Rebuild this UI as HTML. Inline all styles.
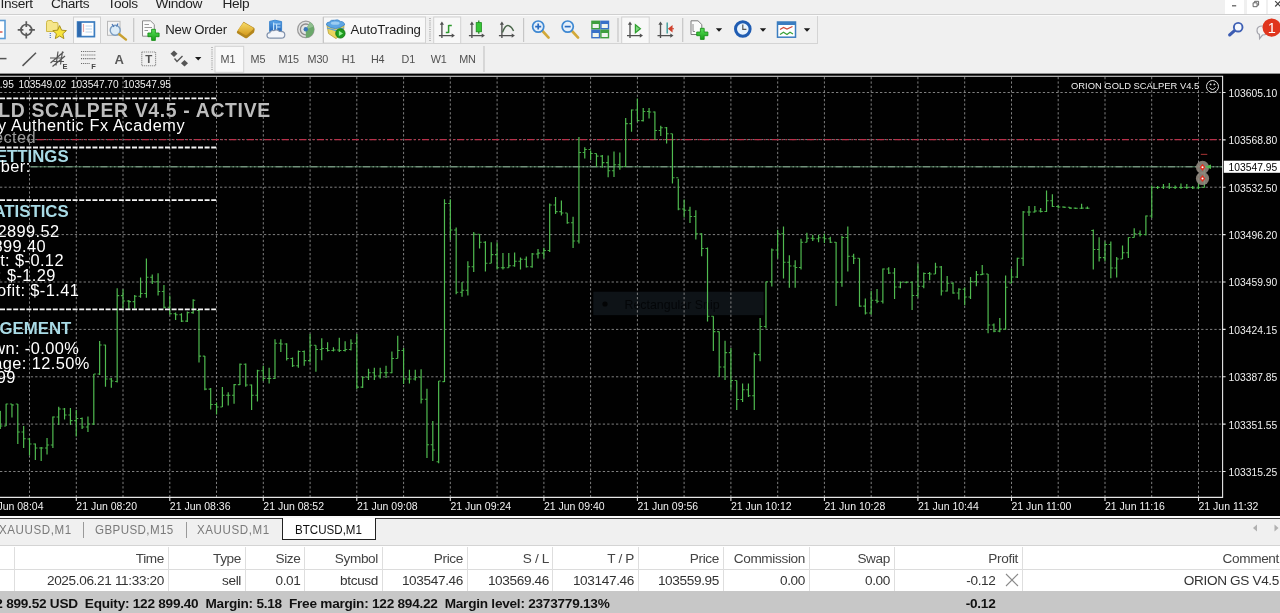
<!DOCTYPE html>
<html><head><meta charset="utf-8"><title>BTCUSD,M1</title>
<style>
html,body{margin:0;padding:0}
body{width:1280px;height:613px;overflow:hidden;background:#f0f0f0;position:relative;font-family:"Liberation Sans",sans-serif;color:#222}
.abs{position:absolute}
.menu span{position:absolute;top:-4px;font-size:13.7px;color:#222;letter-spacing:-0.35px;white-space:nowrap}
.tf span{position:absolute;top:53.5px;font-size:10.2px;color:#555;white-space:nowrap;letter-spacing:-0.2px}
.sep{position:absolute;width:1px;background:#c4c4c4}
.tab{position:absolute;top:522.1px;font-size:13.1px;color:#7a7a7a;white-space:nowrap;display:inline-block;transform:scaleX(.885);transform-origin:0 0}
.th,.td{position:absolute;font-size:13.6px;white-space:nowrap;letter-spacing:-0.35px;text-align:right}
.th{top:550.5px;color:#444}
.td{top:573.4px;color:#333}
.vs{position:absolute;top:547px;width:1px;height:44px;background:#dedede}
#wrap{position:absolute;left:0;top:0;width:1280px;height:613px;will-change:transform;opacity:.999}
</style></head><body><div id="wrap">
<!-- menu -->
<div class="menu">
<span style="left:0.5px">Insert</span><span style="left:51px">Charts</span><span style="left:107.5px">Tools</span><span style="left:155.5px">Window</span><span style="left:222.5px">Help</span>
</div>
<div class="abs" style="left:1225px;top:0;width:19px;height:13.5px;background:#fff"></div>
<div class="abs" style="left:1247px;top:0;width:18.5px;height:13.5px;background:#fff"></div>
<div class="abs" style="left:1267.5px;top:0;width:13px;height:13.5px;background:#fff"></div>
<div class="abs" style="left:0;top:13.8px;width:1280px;height:1px;background:#cfcfcf"></div>
<div class="abs" style="left:0;top:14.8px;width:1280px;height:1px;background:#fbfbfb"></div>
<div class="abs" style="left:0;top:43.3px;width:817px;height:1px;background:#d4d4d4"></div>
<div class="abs" style="left:817px;top:16px;width:1px;height:28px;background:#d4d4d4"></div>
<!--TB0--><svg width="1280" height="74" viewBox="0 0 1280 74" style="position:absolute;left:0;top:0;font-family:'Liberation Sans',sans-serif">
<defs>
<linearGradient id="gold" x1="0" y1="0" x2="0" y2="1"><stop offset="0" stop-color="#f7dc6a"/><stop offset="1" stop-color="#d49a1c"/></linearGradient>
<linearGradient id="blu" x1="0" y1="0" x2="0" y2="1"><stop offset="0" stop-color="#5aa5ea"/><stop offset="1" stop-color="#2466b8"/></linearGradient>
<linearGradient id="grn" x1="0" y1="0" x2="0" y2="1"><stop offset="0" stop-color="#58e058"/><stop offset="1" stop-color="#18a018"/></linearGradient>
</defs>
<!-- active button backgrounds -->
<g fill="#f8f8f8" stroke="#d2d2d2" stroke-width="1">
<rect x="73.5" y="17" width="27" height="26.5"/>
<rect x="323.5" y="17" width="102" height="26"/>
<rect x="433.7" y="17" width="27" height="26.5"/>
<rect x="621.7" y="17" width="27.5" height="26.5"/>
<rect x="215" y="46.3" width="28.7" height="26"/>
</g>
<!-- separators -->
<g stroke="#c6c6c6" stroke-width="1.2">
<path d="M133.7 18V42M323.3 17V43M523.6 18V42M618 18V42M682.7 18V42M484 46V72"/>
</g>
<g stroke="#b0b0b0" stroke-width="1.6" stroke-dasharray="1 1.2"><path d="M430 18V42M212 47V71"/></g>
<!-- partial doc icon -->
<rect x="-3" y="20.5" width="8" height="18" fill="#fff" stroke="#5b9bd5" stroke-width="1.6"/>
<path d="M0 32H2.5" stroke="#d04030" stroke-width="1.3"/>
<!-- crosshair -->
<g stroke="#5a5a5a" stroke-width="1.7" fill="none"><circle cx="26.3" cy="29.9" r="5.4"/><path d="M26.3 21.3V27M26.3 32.8V38.5M17.7 29.9H23.4M29.2 29.9H34.9"/></g>
<!-- folder star -->
<path d="M46.5 22.5Q46.5 20.5 48.5 20.5H51.5L53 22.5H57Q58 22.5 58 24V31.5H46.5Z" fill="#f6e68a" stroke="#c9b23c" stroke-width="0.9"/>
<path d="M59.6 25.6L61.6 30.2L66.4 30.6L62.8 33.8L63.9 38.6L59.6 36L55.3 38.6L56.4 33.8L52.8 30.6L57.6 30.2Z" fill="#f8e43c" stroke="#a8901c" stroke-width="1"/>
<path d="M50.3 33V39" stroke="#4a78c8" stroke-width="1.2" stroke-dasharray="1 1"/>
<!-- window icon -->
<rect x="77.6" y="22" width="16.8" height="14.6" fill="#fff" stroke="#3b7dc0" stroke-width="1.7"/>
<rect x="77.6" y="22" width="4" height="14.6" fill="#2f69ad"/>
<path d="M83.5 24.5V32" stroke="#d05050" stroke-width="1.2" stroke-dasharray="1 1"/>
<path d="M85.5 26H92M85.5 29H92M85.5 32H92" stroke="#bcd6ee" stroke-width="1"/>
<!-- clock magnifier -->
<rect x="107.5" y="21.3" width="12.5" height="14" fill="#f4f4f4" stroke="#b8b8b8" stroke-width="1"/>
<circle cx="115.2" cy="30.2" r="5" fill="#dcecf8" stroke="#7a9cc0" stroke-width="1.4"/>
<path d="M112 24L114 27M118 23.5L116.5 26.5" stroke="#4a78b8" stroke-width="1.2"/>
<path d="M119.3 34.2L126 39.6" stroke="#c9a030" stroke-width="2.4" stroke-linecap="round"/>
<!-- new order -->
<path d="M142.5 20.8H150.5L154.3 24.5V36.2H142.5Z" fill="#fbfbfb" stroke="#8c8c8c" stroke-width="1"/>
<path d="M144.5 24.5H149M144.5 27.5H152M144.5 30.5H148" stroke="#9a9a9a" stroke-width="1.1"/>
<path d="M151.6 29.3H155.4V33H159.1V36.7H155.4V40.4H151.6V36.7H147.9V33H151.6Z" fill="url(#grn)" stroke="#128a12" stroke-width="0.8"/>
<text x="165.3" y="33.7" font-size="13.2" fill="#1e1e1e" letter-spacing="-0.25">New Order</text>
<!-- gold -->
<path d="M243.6 21.8L254 27.8Q255 28.6 254.6 30L254 32.6L247.2 38Q246.2 38.6 245 38L237.6 33.6Q236.4 32.8 237 31.4Z" fill="#b4861c"/>
<path d="M243.6 22.4L253 27.8Q253.8 28.4 253.2 29.2L247 35Q246.2 35.6 245.4 35.2L238.6 31.2Q237.8 30.6 238.2 29.8Z" fill="url(#gold)"/>
<!-- cloud chart -->
<path d="M269.6 21.4L275 20.2L281.6 21.6V31.5H269.6Z" fill="url(#blu)" stroke="#2a78c8" stroke-width="0.8"/>
<path d="M273.6 22.6V31M273.6 24H280.4M276.6 27H280.4M276.6 24V31" stroke="#bfe0fb" stroke-width="1.2" fill="none"/>
<path d="M270.2 38.2Q267 38.2 267 35.2Q267 32.8 269.8 32.6Q270.8 30 274 30.6Q276.6 28.8 279.4 31.4Q284.8 31 284.8 34.8Q284.8 38.2 281.4 38.2Z" fill="#f4f6fa" stroke="#8091ab" stroke-width="1.2"/>
<!-- signal -->
<circle cx="305.8" cy="29.4" r="8.2" fill="#e4e4e4" stroke="#9c9c9c" stroke-width="1.3"/>
<circle cx="305.8" cy="29.4" r="5.4" fill="none" stroke="#8c8c8c" stroke-width="1.3"/>
<path d="M305.8 29.4L310 22.2A8.4 8.4 0 0 1 305.8 37.8Z" fill="#6ba86b"/>
<path d="M305.8 29.4L310 22.2A8.4 8.4 0 0 1 313.6 26.4Z" fill="#8fbf8f"/>
<circle cx="305.8" cy="29.2" r="2.2" fill="#3b78b8"/>
<!-- autotrading icon -->
<path d="M327 25.5L344 25.5L343.4 32L336 38.6L328.6 33.6Z" fill="#ead45e" stroke="#b8a030" stroke-width="0.8"/>
<path d="M327 28L336 30.6L344 28" stroke="#5f9fd8" stroke-width="1.2" fill="none"/>
<path d="M326.4 25Q326.2 22.2 329.4 22Q331 19.6 334.4 20.2Q338.4 19 340.4 21.4Q344.6 21.6 344.6 25Q340 28.4 335.4 28.6Q330.6 28.4 326.4 25Z" fill="#5ea6e4" stroke="#3c84c8" stroke-width="0.8"/>
<ellipse cx="335.2" cy="23.2" rx="4.4" ry="1.6" fill="#9ccdf2"/>
<circle cx="340.4" cy="33.4" r="4.7" fill="#1f9c1f" stroke="#107410" stroke-width="0.8"/>
<path d="M338.9 30.8L343 33.4L338.9 36Z" fill="#9af09a"/>
<text x="350.6" y="34" font-size="13.2" fill="#1e1e1e" letter-spacing="-0.1">AutoTrading</text>
<!-- chart type icons -->
<path d="M441.9 23.6V38M438.9 35.6H452.9" stroke="#505050" stroke-width="1.35" fill="none"/><path d="M441.9 21.4L439.79999999999995 24.8H444.0Z" fill="#505050"/><path d="M454.9 35.6L451.7 33.5V37.7Z" fill="#505050"/>
<path d="M471.9 23.6V38M468.9 35.6H482.9" stroke="#505050" stroke-width="1.35" fill="none"/><path d="M471.9 21.4L469.79999999999995 24.8H474.0Z" fill="#505050"/><path d="M484.9 35.6L481.7 33.5V37.7Z" fill="#505050"/>
<path d="M501.9 23.6V38M498.9 35.6H512.9" stroke="#505050" stroke-width="1.35" fill="none"/><path d="M501.9 21.4L499.79999999999995 24.8H504.0Z" fill="#505050"/><path d="M514.9 35.6L511.7 33.5V37.7Z" fill="#505050"/>
<path d="M630 23.6V38M627 35.6H641" stroke="#505050" stroke-width="1.35" fill="none"/><path d="M630 21.4L627.9 24.8H632.1Z" fill="#505050"/><path d="M643 35.6L639.8 33.5V37.7Z" fill="#505050"/>
<path d="M660.5 23.6V38M657.5 35.6H671.5" stroke="#505050" stroke-width="1.35" fill="none"/><path d="M660.5 21.4L658.4 24.8H662.6Z" fill="#505050"/><path d="M673.5 35.6L670.3 33.5V37.7Z" fill="#505050"/>
<path d="M448.6 25V33M448.6 25.4H451.8M445.8 32.4H448.6" stroke="#2f9a2f" stroke-width="1.5" fill="none"/>
<path d="M478.8 20.6V33.8" stroke="#1a7a1a" stroke-width="1.2"/><rect x="476.2" y="22.6" width="5.2" height="9.2" fill="#35c535" stroke="#1c8c1c" stroke-width="0.8"/>
<path d="M502.4 32.6Q505.4 24.4 508.6 25.6T513.6 31" stroke="#4a664a" stroke-width="1.4" fill="none"/>
<path d="M635.4 24.8L640.4 28.8L635.4 32.8Z" fill="#7fd67f" stroke="#2fa02f" stroke-width="1.2"/>
<path d="M667.2 22.6V33.6" stroke="#3a9a98" stroke-width="1.4"/><path d="M674 28.8H671M668.8 28.8L672 26.2V31.4Z" stroke="#d0402c" stroke-width="1.1" fill="#d0402c"/>
<!-- zoom in/out -->
<g>
<path d="M542.5 31L548.6 37.6" stroke="#d2a838" stroke-width="2.6" stroke-linecap="round"/>
<circle cx="538.2" cy="26.6" r="5.6" fill="#e6f0fa" stroke="#3e88d2" stroke-width="1.7"/>
<path d="M535.2 26.6H541.2M538.2 23.6V29.6" stroke="#2a6cc0" stroke-width="1.7"/>
<path d="M572 31L578.1 37.6" stroke="#d2a838" stroke-width="2.6" stroke-linecap="round"/>
<circle cx="567.7" cy="26.6" r="5.6" fill="#e6f0fa" stroke="#3e88d2" stroke-width="1.7"/>
<path d="M564.7 26.6H570.7" stroke="#2a6cc0" stroke-width="1.7"/>
</g>
<!-- tile -->
<rect x="591.2" y="20.6" width="9" height="9" fill="#3d9e3d"/><rect x="600.2" y="20.6" width="9" height="9" fill="#3770c8"/>
<rect x="591.2" y="29.6" width="9" height="8.8" fill="#3770c8"/><rect x="600.2" y="29.6" width="9" height="8.8" fill="#3d9e3d"/>
<g fill="#eef4ee"><rect x="592.6" y="24" width="6.2" height="4"/><rect x="601.6" y="24" width="6.2" height="4"/><rect x="592.6" y="33" width="6.2" height="4"/><rect x="601.6" y="33" width="6.2" height="4"/></g>
<!-- doc plus -->
<path d="M691 20.8H698L701.8 24.5V34.5H691Z" fill="#fbfbfb" stroke="#7c7c7c" stroke-width="1"/>
<path d="M693 24V31.5H695" stroke="#8a8a8a" stroke-width="1" fill="none"/>
<path d="M700.4 28.3H704.2V32H707.9V35.7H704.2V39.4H700.4V35.7H696.7V32H700.4Z" fill="url(#grn)" stroke="#128a12" stroke-width="0.8"/>
<g fill="#1a1a1a"><path d="M715.8 28.2H722.2L719 31.8Z"/><path d="M759.8 28.2H766.2L763 31.8Z"/><path d="M803.8 28.2H810.2L807 31.8Z"/><path d="M195 57H201.4L198.2 60.6Z"/></g>
<!-- clock -->
<circle cx="742.8" cy="29" r="7.3" fill="#e8f3fd" stroke="#1f5cb2" stroke-width="3"/>
<path d="M742.8 24.6V29.4H746.4" stroke="#555" stroke-width="1.2" fill="none"/>
<!-- chart template icon -->
<rect x="777.5" y="22" width="18" height="15.2" fill="#fff" stroke="#3b7dc0" stroke-width="1.5"/>
<rect x="777.5" y="22" width="18" height="3" fill="#3b7dc0"/>
<path d="M780 29.5L783.5 27.5L787 29L792.5 26.5" stroke="#d04a3a" stroke-width="1.2" fill="none"/>
<path d="M780 34.5L783.5 32.2L787 34.5L790 32.2L793 34" stroke="#3aa23a" stroke-width="1.2" fill="none"/>
<!-- search & chat -->
<path d="M1235.4 29.9L1229.6 35" stroke="#3c5cb2" stroke-width="3" stroke-linecap="round"/>
<circle cx="1238.2" cy="27.2" r="4.3" fill="#f6f9fe" stroke="#3f60b4" stroke-width="1.9"/>
<path d="M1257 30.5Q1257 26 1262.5 26Q1268 26 1268 30.5Q1268 35 1262.5 35L1259.6 38.6L1259.4 34.4Q1257 33.4 1257 30.5Z" fill="#f4f4f4" stroke="#a4a4ac" stroke-width="1.2"/>
<circle cx="1271.7" cy="27.6" r="9.2" fill="#e0361e"/>
<text x="1271.7" y="32.8" font-size="14.5" fill="#fff" text-anchor="middle" style="text-rendering:geometricPrecision">1</text>
<!-- window controls -->
<path d="M1232 5.8H1236.2" stroke="#555" stroke-width="1.2"/>
<path d="M1254.6 2.6V1.3H1258.6V5.2H1257.3M1253.1 2.8H1257.1V6.7H1253.1Z" stroke="#555" stroke-width="0.9" fill="none"/>
<path d="M1275.2 1.2L1280.5 6.5M1280.5 1.2L1275.2 6.5" stroke="#444" stroke-width="1.2"/>
<!-- toolbar 2 -->
<path d="M0 58.6H6.5" stroke="#555" stroke-width="1.5"/>
<path d="M22.5 65.9L36 52.8" stroke="#555" stroke-width="1.5"/>
<g stroke="#555" stroke-width="1.2" fill="none"><path d="M50.5 63L63.5 52M52.5 66.5L65 56M50 58H61M53.5 61.5H64M56 65.5L58 51.5M60.5 64.5L62.5 51.5"/></g>
<text x="62.5" y="69" font-size="7.5" font-weight="bold" fill="#444">E</text>
<g stroke="#666" stroke-width="1.1" stroke-dasharray="1 0.9"><path d="M81 51.5H95.5M81 55H95.5M81 58.6H95.5M81 63.5H90"/></g>
<text x="91.3" y="69.4" font-size="7.5" font-weight="bold" fill="#444">F</text>
<text x="114.4" y="63.6" font-size="13" font-weight="bold" fill="#5a5a5a">A</text>
<rect x="141.8" y="52" width="13.8" height="13.8" fill="none" stroke="#777" stroke-width="1.1" stroke-dasharray="1 1"/>
<text x="148.7" y="63.4" font-size="11.5" font-weight="bold" fill="#555" text-anchor="middle">T</text>
<g fill="#555"><path d="M170.5 53.8L174 50.6L177.5 53.8L174 57Z"/><path d="M181 63.2L184.5 60L188 63.2L184.5 66.4Z"/></g>
<path d="M174.5 58.5L177 61.5L182.5 56" stroke="#555" stroke-width="1.4" fill="none"/>
<g font-size="10.8" fill="#505050" letter-spacing="-0.2">
<text x="220.6" y="63.1">M1</text><text x="250.6" y="63.1">M5</text><text x="278.4" y="63.1">M15</text><text x="307.6" y="63.1">M30</text><text x="341.8" y="63.1">H1</text><text x="371" y="63.1">H4</text><text x="401.6" y="63.1">D1</text><text x="430.8" y="63.1">W1</text><text x="459.2" y="63.1">MN</text>
</g>
</svg>
<!--TB1-->
<!-- chart -->
<svg width="1280" height="613" viewBox="0 0 1280 613" style="position:absolute;left:0;top:0;font-family:'Liberation Sans',sans-serif"><rect x="0" y="73.6" width="1280" height="442.8" fill="#000"/>
<rect x="593.3" y="291.7" width="170.3" height="23.5" fill="#0e1317"/>
<text x="624.5" y="308.6" font-size="12.4" fill="#040608" style="font-family:'Liberation Sans',sans-serif">Rectangular Snip</text>
<circle cx="605" cy="304" r="2.6" fill="#030405"/>
<path d="M29.5 77V497M76.3 77V497M123.0 77V497M169.8 77V497M216.5 77V497M263.3 77V497M310.1 77V497M356.8 77V497M403.6 77V497M450.3 77V497M497.1 77V497M543.9 77V497M590.6 77V497M637.4 77V497M684.1 77V497M730.9 77V497M777.7 77V497M824.4 77V497M871.2 77V497M917.9 77V497M964.7 77V497M1011.5 77V497M1058.2 77V497M1105.0 77V497M1151.7 77V497M1198.5 77V497M0 92.5H1222M0 139.6H1222M0 187.2H1222M0 234.6H1222M0 282.0H1222M0 329.4H1222M0 376.8H1222M0 424.1H1222M0 471.5H1222" stroke="#8e8e8e" stroke-width="0.9" stroke-dasharray="2.3 2.1" fill="none"/>
<path d="M0 76.2H1222.6V497.4H0" stroke="#e6e6e6" stroke-width="1.1" fill="none"/>
<path d="M76.3 497V501M169.8 497V501M263.3 497V501M356.8 497V501M450.3 497V501M543.9 497V501M637.4 497V501M730.9 497V501M824.4 497V501M917.9 497V501M1011.5 497V501M1105.0 497V501M1198.5 497V501M1222 92.5H1225.6M1222 139.9H1225.6M1222 187.2H1225.6M1222 234.6H1225.6M1222 282.0H1225.6M1222 329.4H1225.6M1222 376.8H1225.6M1222 424.1H1225.6M1222 471.5H1225.6" stroke="#e6e6e6" stroke-width="1.1" fill="none"/>
<path d="M37 139.6H1222" stroke="#b8304a" stroke-width="1.1" stroke-dasharray="7 2.5 1.5 2.5 1.5 2.5" fill="none"/>
<path d="M30.5 166.8H1222" stroke="#4c7859" stroke-width="1" fill="none"/>
<path d="M30.5 166.8H1222" stroke="#8cab96" stroke-width="1" stroke-dasharray="7 2.5 1.5 2.5 1.5 2.5" fill="none"/>
<path d="M-1.83 411.0H0.28M0.28 426.0H2.38M4.02 426.0H6.12M6.12 404.0H8.22M9.87 404.0H11.96M11.96 405.0H14.06M15.71 404.0H17.81M17.81 432.0H19.91M21.55 432.0H23.65M23.65 438.7H25.75M27.40 439.0H29.50M29.50 444.0H31.60M33.24 444.0H35.34M35.34 448.0H37.45M39.09 448.0H41.19M41.19 448.0H43.29M44.93 448.0H47.03M47.03 445.0H49.13M50.78 445.0H52.88M52.88 417.0H54.98M56.62 417.0H58.72M58.72 409.0H60.82M62.47 409.0H64.57M64.57 415.0H66.67M68.32 415.0H70.42M70.42 420.6H72.52M74.16 420.6H76.26M76.26 418.5H78.36M80.01 418.5H82.11M82.11 427.0H84.20M85.85 427.0H87.95M87.95 424.0H90.05M91.70 424.0H93.80M93.80 374.0H95.89M97.54 374.0H99.64M99.64 345.0H101.74M103.39 345.0H105.48M105.48 379.0H107.58M109.23 379.0H111.33M111.33 381.0H113.43M115.08 381.4H117.17M117.17 295.6H119.27M120.92 295.6H123.02M123.02 301.0H125.12M126.77 301.0H128.87M128.87 301.6H130.97M132.61 301.6H134.71M134.71 296.3H136.81M138.46 296.3H140.56M140.56 293.5H142.66M144.30 293.5H146.40M146.40 277.2H148.50M150.15 277.2H152.25M152.25 281.8H154.34M155.99 281.8H158.09M158.09 291.4H160.19M161.84 291.4H163.94M163.94 307.3H166.03M167.68 307.3H169.78M169.78 313.7H171.88M173.53 313.7H175.62M175.62 314.7H177.72M179.37 314.7H181.47M181.47 321.1H183.57M185.22 321.1H187.31M187.31 312.6H189.41M191.06 312.6H193.16M193.16 300.3H195.26M196.91 310.5H199.00M199.00 356.1H201.10M202.75 356.1H204.85M204.85 389.1H206.95M208.59 389.1H210.69M210.69 404.4H212.79M214.44 404.4H216.54M216.54 407.0H218.64M220.28 407.0H222.38M222.38 395.3H224.48M226.13 395.3H228.23M228.23 395.3H230.33M231.97 395.3H234.07M234.07 384.6H236.17M237.82 384.6H239.92M239.92 364.3H242.02M243.66 364.3H245.76M245.76 385.0H247.86M249.51 385.0H251.61M251.61 395.3H253.71M255.35 395.3H257.45M257.45 370.8H259.56M261.20 370.8H263.30M263.30 378.5H265.40M267.04 378.5H269.14M269.14 378.5H271.25M272.89 378.5H274.99M274.99 343.3H277.09M278.73 343.3H280.83M280.83 343.9H282.94M284.58 343.9H286.68M286.68 358.5H288.78M290.42 358.5H292.52M292.52 365.7H294.62M296.27 365.7H298.37M298.37 351.4H300.47M302.11 351.4H304.21M304.21 360.6H306.31M307.96 360.6H310.06M310.06 345.3H312.16M313.80 345.3H315.90M315.90 349.4H318.00M319.65 349.4H321.75M321.75 348.4H323.85M325.49 348.4H327.59M327.59 350.4H329.69M331.34 350.4H333.44M333.44 350.0H335.54M337.18 350.0H339.28M339.28 350.4H341.38M343.03 350.4H345.13M345.13 349.4H347.23M348.87 349.4H350.97M350.97 343.3H353.07M354.72 343.3H356.82M356.82 387.1H358.92M360.56 387.1H362.66M362.66 377.3H364.76M366.41 377.3H368.51M368.51 372.8H370.61M372.25 372.8H374.35M374.35 375.9H376.45M378.10 375.9H380.20M380.20 372.8H382.30M383.94 372.8H386.04M386.04 372.8H388.14M389.79 372.8H391.89M391.89 358.5H393.99M395.63 358.5H397.73M397.73 350.4H399.83M401.48 350.4H403.58M403.58 379.0H405.68M407.32 379.0H409.42M409.42 379.0H411.52M413.17 379.0H415.27M415.27 377.3H417.37M419.01 377.3H421.11M421.11 399.3H423.21M424.86 399.3H426.96M426.96 444.8H429.06M430.70 444.8H432.80M432.80 450.0H434.90M436.55 461.7H438.65M438.65 381.0H440.75M442.39 381.6H444.49M444.49 203.4H446.59M448.24 203.4H450.34M450.34 230.0H452.44M454.08 230.0H456.18M456.18 292.3H458.28M459.93 292.3H462.03M462.03 290.3H464.13M465.77 290.3H467.87M467.87 266.8H469.97M471.62 266.8H473.72M473.72 234.2H475.82M477.46 234.2H479.56M479.56 242.3H481.66M483.31 242.3H485.41M485.41 263.3H487.51M489.15 263.3H491.25M491.25 254.6H493.35M495.00 254.6H497.10M497.10 267.8H499.20M500.84 267.8H502.94M502.94 267.8H505.04M506.69 267.8H508.79M508.79 265.8H510.89M512.53 265.8H514.63M514.63 261.3H516.74M518.38 261.3H520.48M520.48 259.3H522.58M524.22 259.3H526.32M526.32 266.8H528.42M530.07 266.8H532.17M532.17 254.0H534.27M535.91 254.0H538.01M538.01 253.1H540.12M541.76 253.1H543.86M543.86 250.5H545.96M547.60 250.5H549.70M549.70 205.0H551.80M553.45 205.0H555.55M555.55 211.6H557.65M559.29 211.6H561.39M561.39 213.0H563.50M565.14 213.0H567.24M567.24 222.8H569.34M570.98 222.8H573.08M573.08 241.0H575.18M576.83 241.0H578.93M578.93 152.4H581.03M582.67 152.4H584.77M584.77 149.4H586.88M588.52 149.4H590.62M590.62 153.5H592.72M594.36 153.5H596.46M596.46 156.1H598.56M600.21 156.1H602.31M602.31 162.6H604.41M606.05 162.6H608.15M608.15 170.8H610.25M611.90 170.8H614.00M614.00 164.7H616.10M617.74 164.7H619.84M619.84 166.7H621.94M623.59 166.5H625.69M625.69 123.6H627.79M629.43 123.6H631.53M631.53 110.0H633.63M635.28 110.0H637.38M637.38 120.6H639.48M641.12 120.6H643.22M643.22 111.4H645.32M646.97 111.4H649.07M649.07 112.0H651.17M652.81 112.0H654.91M654.91 130.4H657.01M658.66 130.4H660.76M660.76 127.7H662.86M664.50 127.7H666.60M666.60 133.8H668.70M670.35 133.8H672.45M672.45 177.7H674.55M676.19 177.7H678.29M678.29 209.0H680.39M682.04 209.0H684.14M684.14 210.3H686.24M687.88 210.3H689.98M689.98 216.4H692.08M693.73 216.4H695.83M695.83 233.7H697.93M699.57 233.7H701.67M701.67 248.4H703.77M705.42 248.4H707.52M707.52 316.3H709.62M711.26 316.3H713.36M713.36 331.6H715.46M717.11 331.6H719.21M719.21 366.9H721.31M722.95 366.9H725.05M725.05 352.6H727.15M728.80 352.6H730.90M730.90 380.5H733.00M734.64 380.5H736.74M736.74 399.5H738.84M740.49 399.5H742.59M742.59 389.7H744.69M746.33 389.7H748.43M748.43 395.8H750.53M752.18 395.8H754.28M754.28 354.6H756.38M758.02 354.6H760.12M760.12 326.5H762.23M763.87 326.5H765.97M765.97 281.7H768.07M769.71 281.7H771.81M771.81 250.0H773.91M775.56 250.0H777.66M777.66 233.7H779.76M781.40 233.7H783.50M783.50 262.3H785.61M787.25 262.3H789.35M789.35 266.0H791.45M793.09 266.0H795.19M795.19 267.4H797.29M798.94 267.4H801.04M801.04 242.3H803.14M804.78 242.3H806.88M806.88 238.2H808.99M810.63 238.2H812.73M812.73 238.8H814.83M816.47 238.8H818.57M818.57 237.8H820.67M822.32 237.8H824.42M824.42 238.8H826.52M828.16 238.8H830.26M830.26 242.3H832.37M834.01 242.3H836.11M836.11 282.3H838.21M839.85 282.3H841.95M841.95 237.4H844.05M845.70 237.4H847.80M847.80 256.2H849.90M851.54 256.2H853.64M853.64 258.2H855.75M857.39 258.2H859.49M859.49 306.1H861.59M863.23 306.1H865.33M865.33 313.0H867.43M869.08 313.0H871.18M871.18 300.3H873.28M874.92 300.3H877.02M877.02 301.3H879.12M880.77 301.3H882.87M882.87 269.0H884.97M886.61 269.0H888.71M888.71 273.0H890.81M892.46 273.0H894.56M894.56 286.9H896.66M898.30 286.9H900.40M900.40 282.2H902.50M904.15 282.2H906.25M906.25 282.2H908.35M909.99 282.2H912.09M912.09 295.4H914.19M915.84 295.4H917.94M917.94 286.3H920.04M921.68 286.3H923.78M923.78 273.4H925.88M927.53 273.4H929.63M929.63 274.0H931.73M933.37 274.0H935.47M935.47 266.9H937.57M939.22 266.9H941.32M941.32 291.0H943.42M945.06 291.0H947.16M947.16 283.2H949.26M950.91 283.2H953.01M953.01 293.0H955.11M956.75 293.0H958.85M958.85 289.3H960.95M962.60 289.3H964.70M964.70 297.0H966.80M968.44 297.0H970.54M970.54 281.6H972.64M974.29 281.6H976.39M976.39 274.6H978.49M980.13 274.6H982.23M982.23 274.0H984.33M985.98 274.0H988.08M988.08 325.0H990.18M991.82 325.0H993.92M993.92 331.1H996.02M997.67 331.1H999.77M999.77 329.1H1001.87M1003.51 329.1H1005.61M1005.61 287.3H1007.71M1009.36 283.0H1011.46M1011.46 277.0H1013.56M1015.20 277.0H1017.30M1017.30 258.3H1019.40M1021.05 258.3H1023.15M1023.15 212.0H1025.25M1026.90 212.0H1029.00M1029.00 212.0H1031.10M1032.74 212.0H1034.84M1034.84 211.0H1036.94M1038.59 211.0H1040.68M1040.68 211.4H1042.78M1044.43 211.4H1046.53M1046.53 200.8H1048.63M1050.28 200.8H1052.38M1052.38 206.5H1054.47M1056.12 206.5H1058.22M1058.22 206.9H1060.32M1061.97 206.9H1064.07M1064.07 207.3H1066.16M1067.81 207.3H1069.91M1069.91 208.1H1072.01M1073.66 208.1H1075.76M1075.76 208.3H1077.86M1079.50 208.3H1081.60M1081.60 208.1H1083.70M1085.35 208.1H1087.44M1087.44 208.3H1089.54M1091.19 230.4H1093.29M1093.29 249.4H1095.39M1097.04 249.4H1099.13M1099.13 257.6H1101.23M1102.88 257.6H1104.98M1104.98 244.5H1107.08M1108.73 244.5H1110.83M1110.83 268.0H1112.92M1114.57 268.0H1116.67M1116.67 259.0H1118.77M1120.42 259.0H1122.52M1122.52 252.8H1124.62M1126.26 252.8H1128.36M1128.36 237.5H1130.46M1132.11 237.5H1134.21M1134.21 233.8H1136.31M1137.95 233.8H1140.05M1140.05 234.4H1142.15M1143.80 234.4H1145.89M1145.89 216.0H1147.99M1149.64 216.0H1151.74M1151.74 187.5H1153.84M1155.49 187.5H1157.59M1157.59 187.5H1159.68M1161.33 187.5H1163.43M1163.43 187.0H1165.53M1167.18 187.0H1169.28M1169.28 187.5H1171.38M1173.02 187.5H1175.12M1175.12 187.5H1177.22M1178.87 187.5H1180.97M1180.97 187.5H1183.07M1184.71 187.5H1186.81M1186.81 187.5H1188.91M1190.56 187.5H1192.65M1192.65 188.0H1194.75M1196.40 188.0H1198.50M1198.50 187.5H1200.60M1202.25 187.5H1204.35M1204.35 167.0H1206.44" stroke="#43a843" stroke-width="1.05" fill="none"/>
<path d="M0.28 411.0V429.0M6.12 403.7V426.0M11.96 404.0V417.5M17.81 404.0V444.0M23.65 426.0V448.0M29.50 438.0V455.6M35.34 443.5V460.0M41.19 447.0V461.0M47.03 438.0V454.6M52.88 416.4V448.0M58.72 406.8V425.0M64.57 408.0V419.6M70.42 408.0V425.0M76.26 410.0V436.5M82.11 417.5V429.0M87.95 416.4V432.0M93.80 374.0V425.0M99.64 341.0V375.0M105.48 344.7V386.7M111.33 378.0V387.7M117.17 288.2V382.4M123.02 289.3V308.4M128.87 299.9V309.4M134.71 295.0V308.4M140.56 277.6V297.7M146.40 258.5V297.7M152.25 274.4V284.0M158.09 273.3V295.6M163.94 285.0V308.4M169.78 295.6V314.7M175.62 312.6V320.0M181.47 313.2V322.1M187.31 311.5V322.1M193.16 299.2V313.7M199.00 309.4V362.6M204.85 356.1V390.2M210.69 388.1V409.5M216.54 402.4V414.6M222.38 387.0V407.0M228.23 392.2V405.4M234.07 384.0V403.8M239.92 363.6V385.0M245.76 363.6V386.7M251.61 384.6V410.0M257.45 369.8V401.4M263.30 365.7V381.0M269.14 367.7V383.4M274.99 339.2V379.0M280.83 339.2V352.0M286.68 343.3V360.6M292.52 357.5V367.1M298.37 350.4V367.7M304.21 350.4V365.7M310.06 334.0V362.6M315.90 345.3V371.8M321.75 338.2V360.2M327.59 342.2V351.4M333.44 347.3V351.4M339.28 337.7V352.0M345.13 341.2V351.4M350.97 339.2V350.4M356.82 334.0V389.1M362.66 376.5V388.1M368.51 368.7V380.0M374.35 367.7V380.0M380.20 367.7V378.5M386.04 365.7V378.0M391.89 351.4V373.2M397.73 335.7V358.5M403.58 348.0V384.0M409.42 369.8V383.4M415.27 369.8V380.6M421.11 369.2V403.4M426.96 388.7V458.0M432.80 421.0V461.1M438.65 381.0V463.2M444.49 199.3V382.0M450.34 199.3V240.0M456.18 227.4V294.3M462.03 282.1V296.8M467.87 261.3V295.4M473.72 232.1V271.9M479.56 234.2V248.5M485.41 241.3V271.5M491.25 242.3V263.3M497.10 242.3V269.5M502.94 253.1V269.5M508.79 253.1V267.8M514.63 252.5V266.8M520.48 257.6V269.5M526.32 256.6V267.4M532.17 253.1V267.8M538.01 249.0V258.6M543.86 247.8V258.6M549.70 203.4V252.0M555.55 196.9V214.0M561.39 200.4V215.6M567.24 213.2V223.8M573.08 216.7V247.9M578.93 137.1V243.4M584.77 147.3V158.5M590.62 150.4V160.0M596.46 153.5V166.7M602.31 154.9V167.7M608.15 155.5V177.3M614.00 151.4V176.9M619.84 152.4V169.8M625.69 118.1V167.1M631.53 109.4V131.8M637.38 98.6V121.6M643.22 108.0V121.6M649.07 108.0V118.5M654.91 111.4V140.0M660.76 125.7V135.9M666.60 127.1V143.4M672.45 133.8V183.4M678.29 178.7V210.3M684.14 199.5V217.4M689.98 206.8V223.1M695.83 210.3V239.5M701.67 233.3V256.2M707.52 247.6V321.4M713.36 316.3V351.0M719.21 331.6V377.1M725.05 340.8V380.0M730.90 348.0V389.7M736.74 380.5V410.0M742.59 383.6V402.0M748.43 383.6V396.9M754.28 352.6V410.0M760.12 318.0V361.2M765.97 281.7V328.5M771.81 248.4V286.4M777.66 229.7V258.6M783.50 226.6V278.6M789.35 255.2V287.8M795.19 260.3V287.8M801.04 238.8V269.4M806.88 232.7V242.3M812.73 234.8V240.9M818.57 234.8V242.3M824.42 233.7V242.9M830.26 236.8V242.9M836.11 241.9V306.1M841.95 235.8V286.8M847.80 226.6V271.5M853.64 253.7V263.9M859.49 258.2V306.7M865.33 298.5V314.5M871.18 291.0V314.8M877.02 289.0V303.3M882.87 268.5V303.6M888.71 267.3V274.0M894.56 268.0V299.1M900.40 281.6V288.3M906.25 281.6V283.2M912.09 281.6V310.1M917.94 263.8V297.5M923.78 272.6V288.3M929.63 272.0V280.2M935.47 262.8V274.0M941.32 265.9V295.4M947.16 276.0V291.4M953.01 282.2V293.8M958.85 288.3V299.5M964.70 287.3V305.2M970.54 277.0V299.1M976.39 271.0V286.3M982.23 264.9V275.0M988.08 274.0V333.2M993.92 323.6V332.2M999.77 317.9V332.2M1005.61 275.5V329.7M1011.46 268.5V283.2M1017.30 257.7V278.0M1023.15 211.0V266.0M1029.00 205.9V216.0M1034.84 205.9V212.6M1040.68 207.9V212.6M1046.53 190.6V212.0M1052.38 194.3V206.9M1058.22 205.3V208.5M1064.07 206.5V208.1M1069.91 207.0V208.9M1075.76 207.7V208.9M1081.60 203.8V208.9M1087.44 206.5V208.9M1093.29 229.5V269.5M1099.13 237.2V261.6M1104.98 241.5V261.6M1110.83 241.5V278.2M1116.67 257.0V277.6M1122.52 245.6V259.0M1128.36 237.5V257.9M1134.21 228.3V237.5M1140.05 230.4V236.5M1145.89 215.5V235.4M1151.74 185.5V218.0M1157.59 186.0V189.0M1163.43 184.0V189.0M1169.28 183.0V189.0M1175.12 185.5V189.0M1180.97 183.5V189.0M1186.81 184.0V189.0M1192.65 186.0V189.0M1198.50 180.4V189.0M1204.35 166.0V187.5" stroke="#50bb50" stroke-width="1.2" fill="none"/>
<circle cx="1202.5" cy="167.3" r="6.6" fill="#90887e" opacity="0.9"/>
<path d="M1202.5 163.70000000000002L1205.3 167.3L1202.5 170.9L1199.7 167.3Z" fill="#e03020"/>
<circle cx="1202.5" cy="167.3" r="1" fill="#fff"/>
<circle cx="1202.5" cy="178.5" r="6.6" fill="#90887e" opacity="0.9"/>
<path d="M1202.5 174.9L1205.3 178.5L1202.5 182.1L1199.7 178.5Z" fill="#e03020"/>
<circle cx="1202.5" cy="178.5" r="1" fill="#fff"/>
<path d="M1200.8 154.4H1207.3" stroke="#8e2c2c" stroke-width="1.2"/>
<path d="M1205 166.8L1211 164.5V169Z" fill="#4cba4c"/>
<circle cx="1212.5" cy="86.5" r="6" fill="none" stroke="#e0e0e0" stroke-width="1"/>
<circle cx="1210.6" cy="84.4" r="0.9" fill="#e0e0e0"/><circle cx="1214.4" cy="84.4" r="0.9" fill="#e0e0e0"/>
<path d="M1209.3 87.4Q1212.5 91.6 1215.7 87.4" stroke="#e0e0e0" stroke-width="1" fill="none"/>
<rect x="1223.8" y="160.7" width="57" height="12.1" fill="#fff"/>
<path d="M0 98.3H217.7" stroke="#f4f4f4" stroke-width="1.8" stroke-dasharray="5 1.6" fill="none"/>
<path d="M0 147.5H217.7" stroke="#f4f4f4" stroke-width="1.8" stroke-dasharray="5 1.6" fill="none"/>
<path d="M0 200.1H217.7" stroke="#f4f4f4" stroke-width="1.8" stroke-dasharray="5 1.6" fill="none"/>
<path d="M0 309.3H217.7" stroke="#f4f4f4" stroke-width="1.8" stroke-dasharray="5 1.6" fill="none"/>
<text x="1228.6" y="96.9" font-size="10.3" fill="#f0f0f0" text-anchor="start" font-weight="normal" >103605.10</text>
<text x="1228.6" y="144.3" font-size="10.3" fill="#f0f0f0" text-anchor="start" font-weight="normal" >103568.80</text>
<text x="1228.6" y="191.7" font-size="10.3" fill="#f0f0f0" text-anchor="start" font-weight="normal" >103532.50</text>
<text x="1228.6" y="239.0" font-size="10.3" fill="#f0f0f0" text-anchor="start" font-weight="normal" >103496.20</text>
<text x="1228.6" y="286.4" font-size="10.3" fill="#f0f0f0" text-anchor="start" font-weight="normal" >103459.90</text>
<text x="1228.6" y="333.8" font-size="10.3" fill="#f0f0f0" text-anchor="start" font-weight="normal" >103424.15</text>
<text x="1228.6" y="381.1" font-size="10.3" fill="#f0f0f0" text-anchor="start" font-weight="normal" >103387.85</text>
<text x="1228.6" y="428.5" font-size="10.3" fill="#f0f0f0" text-anchor="start" font-weight="normal" >103351.55</text>
<text x="1228.6" y="475.9" font-size="10.3" fill="#f0f0f0" text-anchor="start" font-weight="normal" >103315.25</text>
<text x="1228.6" y="171.3" font-size="10.3" fill="#000" text-anchor="start" font-weight="normal" >103547.95</text>
<text x="-17.2" y="510" font-size="10.5" fill="#f0f0f0" text-anchor="start" font-weight="normal" >21 Jun 08:04</text>
<text x="76.3" y="510" font-size="10.5" fill="#f0f0f0" text-anchor="start" font-weight="normal" >21 Jun 08:20</text>
<text x="169.8" y="510" font-size="10.5" fill="#f0f0f0" text-anchor="start" font-weight="normal" >21 Jun 08:36</text>
<text x="263.3" y="510" font-size="10.5" fill="#f0f0f0" text-anchor="start" font-weight="normal" >21 Jun 08:52</text>
<text x="356.9" y="510" font-size="10.5" fill="#f0f0f0" text-anchor="start" font-weight="normal" >21 Jun 09:08</text>
<text x="450.4" y="510" font-size="10.5" fill="#f0f0f0" text-anchor="start" font-weight="normal" >21 Jun 09:24</text>
<text x="543.9" y="510" font-size="10.5" fill="#f0f0f0" text-anchor="start" font-weight="normal" >21 Jun 09:40</text>
<text x="637.4" y="510" font-size="10.5" fill="#f0f0f0" text-anchor="start" font-weight="normal" >21 Jun 09:56</text>
<text x="730.9" y="510" font-size="10.5" fill="#f0f0f0" text-anchor="start" font-weight="normal" >21 Jun 10:12</text>
<text x="824.5" y="510" font-size="10.5" fill="#f0f0f0" text-anchor="start" font-weight="normal" >21 Jun 10:28</text>
<text x="918.0" y="510" font-size="10.5" fill="#f0f0f0" text-anchor="start" font-weight="normal" >21 Jun 10:44</text>
<text x="1011.5" y="510" font-size="10.5" fill="#f0f0f0" text-anchor="start" font-weight="normal" >21 Jun 11:00</text>
<text x="1105.0" y="510" font-size="10.5" fill="#f0f0f0" text-anchor="start" font-weight="normal" >21 Jun 11:16</text>
<text x="1198.5" y="510" font-size="10.5" fill="#f0f0f0" text-anchor="start" font-weight="normal" >21 Jun 11:32</text>
<text x="171" y="88.2" font-size="10.15" fill="#f0f0f0" text-anchor="end" font-weight="normal" word-spacing="1.7">BTCUSD,M1  103547.95 103549.02 103547.70 103547.95</text>
<text x="1199.2" y="88.8" font-size="9.4" fill="#f0f0f0" text-anchor="end" font-weight="normal" >ORION GOLD SCALPER V4.5</text>
<text x="270.8" y="117.3" font-size="19.4" fill="#bdbdbd" text-anchor="end" font-weight="bold" letter-spacing="0.66">ORION GOLD SCALPER V4.5 - ACTIVE</text>
<text x="185.3" y="130.5" font-size="16.3" fill="#ffffff" text-anchor="end" font-weight="normal" letter-spacing="0.62">by Authentic Fx Academy</text>
<text x="36" y="142.5" font-size="16.4" fill="#9a9a9a" text-anchor="end" font-weight="normal" letter-spacing="0.4">License: Protected</text>
<text x="68.6" y="162.4" font-size="16.8" fill="#a9dbe6" text-anchor="end" font-weight="bold" >EA SETTINGS</text>
<text x="30.6" y="172" font-size="16.4" fill="#ffffff" text-anchor="end" font-weight="normal" letter-spacing="0.4">Magic Number:</text>
<text x="68.6" y="217.3" font-size="16.8" fill="#a9dbe6" text-anchor="end" font-weight="bold" >ACCOUNT STATISTICS</text>
<text x="59.5" y="237.3" font-size="16.4" fill="#ffffff" text-anchor="end" font-weight="normal" letter-spacing="0.4">Balance: $122899.52</text>
<text x="46" y="251.8" font-size="16.4" fill="#ffffff" text-anchor="end" font-weight="normal" letter-spacing="0.4">Equity: $122899.40</text>
<text x="63.9" y="266.4" font-size="16.4" fill="#ffffff" text-anchor="end" font-weight="normal" letter-spacing="0.4">Floating Profit: $-0.12</text>
<text x="55.8" y="281" font-size="16.4" fill="#ffffff" text-anchor="end" font-weight="normal" letter-spacing="0.4">Today: $-1.29</text>
<text x="79.2" y="295.5" font-size="16.4" fill="#ffffff" text-anchor="end" font-weight="normal" letter-spacing="0.4">Total Profit: $-1.41</text>
<text x="71.3" y="334.2" font-size="16.8" fill="#a9dbe6" text-anchor="end" font-weight="bold" >RISK MANAGEMENT</text>
<text x="79.2" y="353.9" font-size="16.4" fill="#ffffff" text-anchor="end" font-weight="normal" letter-spacing="0.4">Drawdown: -0.00%</text>
<text x="89.7" y="368.8" font-size="16.4" fill="#ffffff" text-anchor="end" font-weight="normal" letter-spacing="0.4">Margin Usage: 12.50%</text>
<text x="15.8" y="383" font-size="16.4" fill="#ffffff" text-anchor="end" font-weight="normal" letter-spacing="0.4">Lot: 0.0099</text></svg>
<!-- tabs -->
<div class="abs" style="left:0;top:516.3px;width:1280px;height:2px;background:#fafafa"></div>
<div class="abs" style="left:0;top:518.2px;width:282.6px;height:1.2px;background:#3c3c3c"></div>
<div class="abs" style="left:375.7px;top:518.2px;width:905px;height:1.2px;background:#3c3c3c"></div>
<div class="abs" style="left:282px;top:518.2px;width:91.6px;height:20.6px;background:#fff;border:1.2px solid #222;border-top:none"></div>
<span class="tab" style="left:-0.8px;letter-spacing:.65px">XAUUSD,M1</span>
<span class="tab" style="left:94.6px;letter-spacing:.45px">GBPUSD,M15</span>
<span class="tab" style="left:197.3px;letter-spacing:.65px">XAUUSD,M1</span>
<span class="tab" style="left:295px;color:#111">BTCUSD,M1</span>
<div class="sep" style="left:83px;top:522px;height:16px;background:#9a9a9a"></div>
<div class="sep" style="left:186px;top:522px;height:16px;background:#9a9a9a"></div>
<svg class="abs" style="left:1250px;top:522px" width="30" height="12" viewBox="0 0 30 12"><path d="M7 2.5V9.5L3 6Z" fill="#b0b0b0"/><path d="M24.5 2.5V9.5L28.5 6Z" fill="#b0b0b0"/></svg>
<!-- terminal -->
<div class="abs" style="left:0;top:545.4px;width:1280px;height:1px;background:#d4d4d4"></div>
<div class="abs" style="left:0;top:546.4px;width:1280px;height:44.8px;background:#fff"></div>
<div class="abs" style="left:0;top:568.6px;width:1280px;height:1px;background:#dcdcdc"></div>
<div class="abs" style="left:0;top:591px;width:1280px;height:22px;background:#c7c7c7"></div>
<div class="vs" style="left:14px"></div><div class="vs" style="left:168px"></div><div class="vs" style="left:244.5px"></div><div class="vs" style="left:303.5px"></div><div class="vs" style="left:381.5px"></div><div class="vs" style="left:466.5px"></div><div class="vs" style="left:551.8px"></div><div class="vs" style="left:637.5px"></div><div class="vs" style="left:722.8px"></div><div class="vs" style="left:808.5px"></div><div class="vs" style="left:894.3px"></div><div class="vs" style="left:1021.8px"></div>
<span class="th" style="right:1116px">Time</span>
<span class="th" style="right:1039px">Type</span>
<span class="th" style="right:979.5px">Size</span>
<span class="th" style="right:902px">Symbol</span>
<span class="th" style="right:817px">Price</span>
<span class="th" style="right:731px">S / L</span>
<span class="th" style="right:646px">T / P</span>
<span class="th" style="right:561px">Price</span>
<span class="th" style="right:475px">Commission</span>
<span class="th" style="right:390px">Swap</span>
<span class="th" style="right:262px">Profit</span>
<span class="th" style="right:1px">Comment</span>
<span class="td" style="right:1116px">2025.06.21 11:33:20</span>
<span class="td" style="right:1039px">sell</span>
<span class="td" style="right:979.5px">0.01</span>
<span class="td" style="right:902px">btcusd</span>
<span class="td" style="right:817px">103547.46</span>
<span class="td" style="right:731px">103569.46</span>
<span class="td" style="right:646px">103147.46</span>
<span class="td" style="right:561px">103559.95</span>
<span class="td" style="right:475px">0.00</span>
<span class="td" style="right:390px">0.00</span>
<span class="td" style="right:284.5px">-0.12</span>
<span class="td" style="right:1px">ORION GS V4.5</span>
<svg class="abs" style="left:1005px;top:573px" width="14" height="14" viewBox="0 0 14 14"><path d="M1 1L13 13M13 1L1 13" stroke="#8a8a8a" stroke-width="1.1" fill="none"/></svg>
<span class="abs" style="right:670.5px;top:595.5px;font-size:13.6px;font-weight:bold;color:#111;white-space:nowrap;letter-spacing:-0.24px">Balance: 122 899.52 USD&nbsp; Equity: 122 899.40&nbsp; Margin: 5.18&nbsp; Free margin: 122 894.22&nbsp; Margin level: 2373779.13%</span>
<span class="abs" style="right:284.5px;top:595.5px;font-size:13.6px;font-weight:bold;color:#111;white-space:nowrap;letter-spacing:-0.24px">-0.12</span>
</div></body></html>
